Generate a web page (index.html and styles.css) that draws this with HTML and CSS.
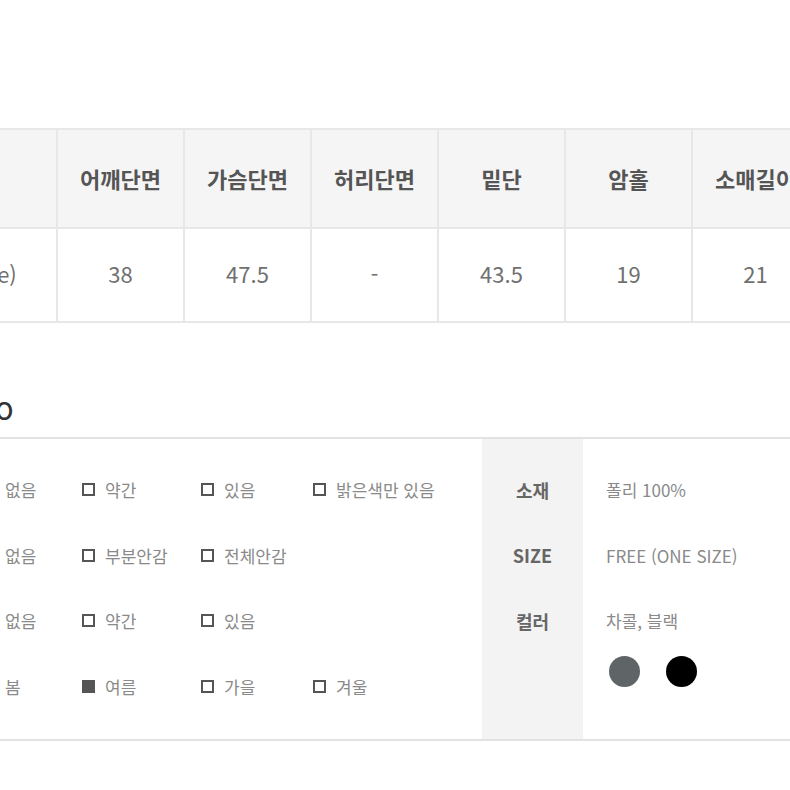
FILE: index.html
```html
<!DOCTYPE html>
<html lang="ko">
<head>
<meta charset="utf-8">
<link rel="stylesheet" href="styles.css">
</head>
<body>
<div class="page">
  <table class="size-table">
    <thead>
      <tr>
        <th class="c-first">사이즈</th>
        <th>어깨단면</th>
        <th>가슴단면</th>
        <th>허리단면</th>
        <th>밑단</th>
        <th>암홀</th>
        <th>소매길이</th>
      </tr>
    </thead>
    <tbody>
      <tr>
        <td class="c-first">(free size)</td>
        <td>38</td>
        <td>47.5</td>
        <td>-</td>
        <td>43.5</td>
        <td>19</td>
        <td>21</td>
      </tr>
    </tbody>
  </table>

  <section class="info">
    <h2 class="info-title">INFO</h2>
    <div class="info-body">
      <div class="options">
        <div class="opt-row">
          <span class="opt-label">비침</span>
          <span class="opt"><i class="cb"></i>없음</span>
          <span class="opt"><i class="cb"></i>약간</span>
          <span class="opt"><i class="cb"></i>있음</span>
          <span class="opt"><i class="cb"></i>밝은색만 있음</span>
        </div>
        <div class="opt-row">
          <span class="opt-label">안감</span>
          <span class="opt"><i class="cb"></i>없음</span>
          <span class="opt"><i class="cb"></i>부분안감</span>
          <span class="opt"><i class="cb"></i>전체안감</span>
          <span class="opt"></span>
        </div>
        <div class="opt-row">
          <span class="opt-label">신축성</span>
          <span class="opt"><i class="cb"></i>없음</span>
          <span class="opt"><i class="cb"></i>약간</span>
          <span class="opt"><i class="cb"></i>있음</span>
          <span class="opt"></span>
        </div>
        <div class="opt-row">
          <span class="opt-label">계절</span>
          <span class="opt"><i class="cb"></i>봄</span>
          <span class="opt"><i class="cb on"></i>여름</span>
          <span class="opt"><i class="cb"></i>가을</span>
          <span class="opt"><i class="cb"></i>겨울</span>
        </div>
      </div>
      <div class="spec">
        <div class="spec-labels">
          <div class="spec-row">소재</div>
          <div class="spec-row">SIZE</div>
          <div class="spec-row">컬러</div>
        </div>
        <div class="spec-values">
          <div class="spec-row">폴리 100%</div>
          <div class="spec-row">FREE (ONE SIZE)</div>
          <div class="spec-row">차콜, 블랙</div>
          <div class="swatches">
            <span class="swatch charcoal"></span>
            <span class="swatch black"></span>
          </div>
        </div>
      </div>
    </div>
  </section>
</div>
</body>
</html>
```

FILE: styles.css
```css
html, body {
  margin: 0;
  padding: 0;
  background: #ffffff;
  overflow: hidden;
}

body {
  font-family: "Noto Sans CJK KR", "Noto Sans", sans-serif;
  color: #666;
  width: 790px;
  height: 790px;
}

.page {
  padding-top: 128px;
}

.size-table {
  margin-left: -124px;
  width: 942px;
  border-collapse: collapse;
  table-layout: fixed;
  font-size: 22px;
}

.size-table th,
.size-table td {
  width: 127px;
  box-sizing: border-box;
  border: 2px solid #e7e7e7;
  text-align: center;
  padding: 0;
}

.size-table th.c-first,
.size-table td.c-first {
  width: 180px;
}

.size-table th {
  height: 99px;
  padding-bottom: 2px;
  background: #f5f5f5;
  color: #555;
  font-weight: 700;
}

.size-table td {
  height: 94px;
  padding-bottom: 5px;
  color: #707070;
  font-weight: 400;
}

.info {
  margin-left: -200px;
  margin-top: 68px;
}

.info-title {
  margin: 0;
  padding-left: 157px;
  font-size: 24px;
  font-weight: 500;
  color: #333;
  line-height: 38px;
  height: 38px;
  padding-bottom: 8px;
  border-bottom: 2px solid #e2e2e2;
}

.info-body {
  display: flex;
  height: 300px;
  border-bottom: 2px solid #e2e2e2;
}

.options {
  width: 682px;
  padding-top: 18px;
  box-sizing: border-box;
}

.opt-row {
  display: grid;
  grid-template-columns: 182px 100px 119px 112px 1fr;
  height: 65.5px;
  align-items: center;
  font-size: 17px;
  color: #8a8a8a;
}

.opt-label {
  color: #555;
}

.opt {
  display: flex;
  align-items: center;
  gap: 10px;
  white-space: nowrap;
}

.cb {
  display: inline-block;
  flex: none;
  width: 13px;
  height: 13px;
  box-sizing: border-box;
  border: 2px solid #555;
}

.cb.on {
  background: #555;
}

.spec {
  display: flex;
  flex: 1;
}

.spec-labels {
  width: 101px;
  background: #f3f3f3;
  padding-top: 18px;
  box-sizing: border-box;
  text-align: center;
  font-weight: 700;
  color: #666;
  font-size: 18px;
}

.spec-values {
  flex: 1;
  padding-top: 18px;
  padding-left: 23px;
  font-size: 17px;
  color: #8a8a8a;
}

.spec-row {
  height: 65.5px;
  display: flex;
  align-items: center;
}

.spec-labels .spec-row {
  justify-content: center;
}

.swatches {
  display: flex;
  gap: 26px;
  margin-top: 2px;
  padding-left: 3px;
}

.swatch {
  display: inline-block;
  width: 31px;
  height: 31px;
  border-radius: 50%;
}

.swatch.charcoal {
  background: #5f6566;
}

.swatch.black {
  background: #000;
}
```
